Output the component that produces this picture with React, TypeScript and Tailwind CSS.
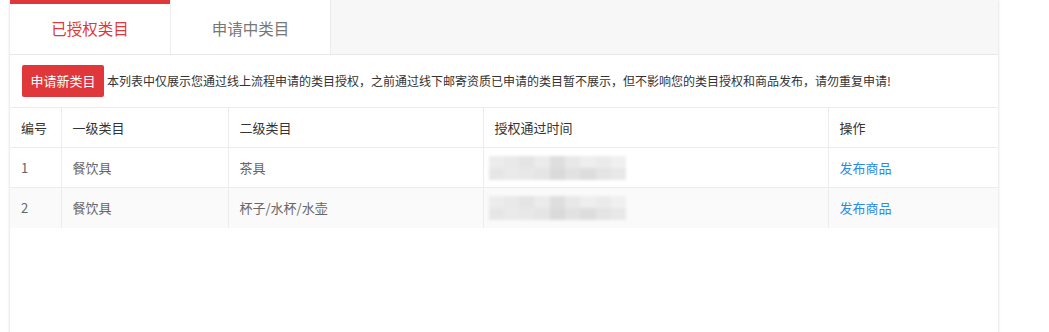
const rows = [
  { id: 1, first: '餐饮具', second: '茶具', alt: false },
  { id: 2, first: '餐饮具', second: '杯子/水杯/水壶', alt: true },
]

const blurTop = ['bg-[#ececec]', 'bg-[#e9e9e9]', 'bg-[#e4e4e4]', 'bg-[#ebebeb]', 'bg-[#dedede]', 'bg-[#e8e8e8]', 'bg-[#eeeeee]', 'bg-[#ebebeb]', 'bg-[#f0f0f0]']
const blurBottom = ['bg-[#e6e6e6]', 'bg-[#eaeaea]', 'bg-[#e8e8e8]', 'bg-[#e5e5e5]', 'bg-[#dadada]', 'bg-[#e2e2e2]', 'bg-[#dddddd]', 'bg-[#e4e4e4]', 'bg-[#e8e8e8]']

function Blurred() {
  return (
    <div className="w-[138px] flex flex-col blur-[1.5px]">
      <div className="flex h-[12px]">{blurTop.map((c, i) => <div key={i} className={`flex-1 ${c}`} />)}</div>
      <div className="flex h-[12px]">{blurBottom.map((c, i) => <div key={i} className={`flex-1 ${c}`} />)}</div>
    </div>
  )
}

export default function App() {
  return (
    <div className="w-[1049px] h-[332px] bg-white overflow-hidden font-['Noto_Sans_CJK_SC','Microsoft_YaHei',sans-serif]">
      <div className="ml-[10px] w-[988px] min-h-[340px] bg-white shadow-[0_0_3px_rgba(0,0,0,0.18)]">
        <div className="flex h-[55px] bg-[#f7f7f7] border-b border-[#e8e8e8]">
          <div className="w-[160px] bg-white border-t-4 border-[#e0383a] flex items-center justify-center text-[15.5px] text-[#e0383a] pb-[1px]">已授权类目</div>
          <div className="w-[161px] bg-white border-l border-r border-[#ececec] flex items-center justify-center text-[15.5px] text-[#777] pt-[3px]">申请中类目</div>
        </div>
        <div className="flex items-center h-[52px] pl-[12px]">
          <button className="h-[32px] w-[82px] bg-[#e0383a] text-white text-[13px] rounded-[2px]">申请新类目</button>
          <span className="ml-[3px] text-[12px] text-[#333]">本列表中仅展示您通过线上流程申请的类目授权，之前通过线下邮寄资质已申请的类目暂不展示，但不影响您的类目授权和商品发布，请勿重复申请!</span>
        </div>
        <table className="w-full border-collapse text-[13px] table-fixed">
          <colgroup>
            <col className="w-[51px]" />
            <col className="w-[167px]" />
            <col className="w-[255px]" />
            <col className="w-[345px]" />
            <col />
          </colgroup>
          <thead>
            <tr className="h-[40px] border-t border-b border-[#ececec] text-left text-[#333]">
              <th className="px-[11px] font-normal">编号</th>
              <th className="px-[11px] font-normal border-l border-[#ececec]">一级类目</th>
              <th className="px-[11px] font-normal border-l border-[#ececec]">二级类目</th>
              <th className="px-[11px] font-normal border-l border-[#ececec]">授权通过时间</th>
              <th className="px-[11px] font-normal border-l border-[#ececec]">操作</th>
            </tr>
          </thead>
          <tbody>
            {rows.map((r) => (
              <tr key={r.id} className={`h-[40px] text-[#666] ${r.alt ? 'bg-[#fafafa]' : 'bg-white border-b border-[#ececec]'}`}>
                <td className="px-[11px]">{r.id}</td>
                <td className="px-[11px] border-l border-[#ececec]">{r.first}</td>
                <td className="px-[11px] border-l border-[#ececec]">{r.second}</td>
                <td className="pl-[5px] border-l border-[#ececec]"><Blurred /></td>
                <td className="px-[11px] border-l border-[#ececec] text-[#2b8ae8]">发布商品</td>
              </tr>
            ))}
          </tbody>
        </table>
      </div>
    </div>
  )
}
